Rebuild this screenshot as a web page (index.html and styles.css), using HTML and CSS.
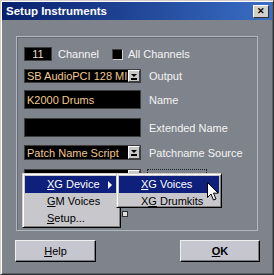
FILE: index.html
```html
<!DOCTYPE html>
<html lang="en">
<head>
    <meta charset="UTF-8">
    <title>Setup Instruments</title>
<link rel="stylesheet" href="styles.css">
</head>
<body>
    <div class="window">
        <div class="titlebar">
            <span class="title">Setup Instruments</span>
            <span class="close">&#x2715;</span>
        </div>

        <div class="group">
            <div class="row row-channel">
                <div class="field small">11</div>
                <span class="label channel-label">Channel</span>
                <span class="check"></span>
                <span class="label all">All Channels</span>
            </div>
            <div class="row row-output">
                <div class="field combo"><span class="txt">SB AudioPCI 128 MIDI</span><span class="drop"></span></div>
                <span class="label">Output</span>
            </div>
            <div class="row row-name">
                <div class="field"><span class="txt">K2000 Drums</span></div>
                <span class="label">Name</span>
            </div>
            <div class="row row-ext">
                <div class="field"></div>
                <span class="label">Extended Name</span>
            </div>
            <div class="row row-patch">
                <div class="field combo"><span class="txt">Patch Name Script</span><span class="drop"></span></div>
                <span class="label">Patchname Source</span>
            </div>
            <div class="row row-device">
                <div class="field combo"><span class="txt"></span><span class="drop"></span></div>
                <span class="label focus">XG Device</span>
            </div>
            <div class="row row-stub">
                <span class="stub"></span>
            </div>
        </div>

        <div class="buttons">
            <button class="btn"><u>H</u>elp</button>
            <button class="btn ok"><u>O</u>K</button>
        </div>

        <!-- popup menus over the dialog -->
        <div class="menu main-menu">
            <div class="item active"><u>X</u>G Device<span class="arrow"></span></div>
            <div class="item"><u>G</u>M Voices</div>
            <div class="item"><u>S</u>etup...</div>
        </div>
        <div class="menu sub-menu">
            <div class="item active"><u>X</u>G Voices</div>
            <div class="item">X<u>G</u> Drumkits</div>
        </div>

        <svg class="cursor" width="12" height="19" viewBox="0 0 12 19">
            <path d="M0.5 0.5 L0.5 15.5 L4 12 L6.5 18 L9 17 L6.5 11.2 L11.2 11.2 Z" fill="#fff" stroke="#000" stroke-width="1"/>
        </svg>
    </div>
</body>
</html>
```

FILE: styles.css
```css
body {
    margin: 0;
    font-family: "Liberation Sans", Arial, sans-serif;
    font-size: 11px;
}

.window {
    position: relative;
    width: 274px;
    height: 275px;
    box-sizing: border-box;
    padding: 1px;
    background-color: #7f838b;
    border: 1px solid;
    border-color: #d4d0c8 #303030 #303030 #d4d0c8;
    box-shadow: inset 1px 1px #ffffff, inset -1px -1px #5a5e66;
}

.titlebar {
    height: 18px;
    display: flex;
    align-items: center;
    justify-content: space-between;
    padding: 0 3px 0 4px;
    background: linear-gradient(90deg, #08206c, #3a6ec4);
}

.title {
    color: #ffffff;
    font-weight: bold;
    font-size: 11.5px;
}

.close {
    width: 14px;
    height: 11px;
    line-height: 11px;
    text-align: center;
    font-size: 9px;
    font-weight: bold;
    color: #000;
    background-color: #d4d0c8;
    border: 1px solid;
    border-color: #ffffff #303030 #303030 #ffffff;
}

.group {
    width: 242px;
    height: 195px;
    box-sizing: border-box;
    margin: 16px 0 0 14px;
    padding: 10px 0 0 7px;
    border: 1px solid #b2b6be;
    box-shadow: inset 1px 1px #666a72;
}

.row {
    display: flex;
    align-items: center;
}

.row-channel { height: 14px; }
.row-output { height: 14px; margin-top: 8px; }
.row-name { height: 19px; margin-top: 7px; }
.row-ext { height: 19px; margin-top: 9px; }
.row-patch { height: 15px; margin-top: 8px; }
.row-device { height: 15px; margin-top: 9px; }
.row-stub { height: 6px; margin-top: 27px; }

.field {
    position: relative;
    width: 117px;
    height: 100%;
    box-sizing: border-box;
    display: flex;
    align-items: center;
    padding-left: 2px;
    background-color: #000000;
    border: 1px solid #3c3c3c;
    color: #f2c98e;
    font-size: 11px;
    overflow: hidden;
    white-space: nowrap;
}

.field.small {
    width: 28px;
    justify-content: center;
    padding-left: 0;
    color: #ecdcc0;
}

.field .txt {
    min-width: 0;
    overflow: hidden;
}

.combo .txt {
    width: 103px;
    flex: none;
}

.drop {
    position: absolute;
    right: 0;
    top: 0;
    width: 12px;
    height: 100%;
    box-sizing: border-box;
    background-color: #c8c8c8;
    border: 1px solid;
    border-color: #ffffff #404040 #404040 #ffffff;
}

.drop::before {
    content: "";
    position: absolute;
    left: 2px;
    top: 3px;
    border-left: 3px solid transparent;
    border-right: 3px solid transparent;
    border-top: 3px solid #000;
}

.drop::after {
    content: "";
    position: absolute;
    left: 2px;
    top: 7px;
    width: 6px;
    height: 2px;
    background-color: #000;
}

.label {
    margin-left: 8px;
    color: #f4f4f4;
    font-size: 11px;
    white-space: nowrap;
}

.channel-label {
    margin-left: 6px;
    width: 54px;
}

.check {
    width: 11px;
    height: 11px;
    box-sizing: border-box;
    background-color: #000;
    border: 1px solid;
    border-color: #404040 #d0d0d0 #d0d0d0 #404040;
}

.label.all {
    margin-left: 5px;
}

.label.focus {
    margin-left: 6px;
    padding: 1px 3px 1px 2px;
    border: 1px dotted #202020;
}

.stub {
    margin-left: 98px;
    width: 6px;
    height: 6px;
    box-sizing: border-box;
    background-color: #e0e0e0;
    border: 1px solid #303030;
}

.buttons {
    display: flex;
    justify-content: space-between;
    margin-top: 9px;
    padding: 0 12px 0 13px;
}

.btn {
    width: 81px;
    height: 22px;
    padding: 0;
    font-family: "Liberation Sans", Arial, sans-serif;
    font-size: 11px;
    color: #000;
    background-color: #c6c6ce;
    border: 1px solid;
    border-color: #f0f0f0 #000000 #000000 #f0f0f0;
    box-shadow: inset -1px -1px #7a7a82;
}

.btn.ok {
    width: 80px;
    font-weight: bold;
}

.menu {
    position: absolute;
    box-sizing: border-box;
    padding: 2px;
    background-color: #c8c8cc;
    border: 1px solid;
    border-color: #d4d0c8 #000000 #000000 #d4d0c8;
    box-shadow: inset 1px 1px #ffffff, inset -1px -1px #808080;
    font-size: 11px;
}

.main-menu {
    left: 21px;
    top: 172px;
    width: 99px;
    height: 55px;
}

.sub-menu {
    left: 115px;
    top: 172px;
    width: 106px;
    height: 35px;
}

.item {
    position: relative;
    height: 17px;
    line-height: 17px;
    padding-left: 22px;
    color: #000;
    white-space: nowrap;
}

.item.active {
    background-color: #0e1f7c;
    color: #ffffff;
}

.arrow {
    position: absolute;
    right: 6px;
    top: 5px;
    border-top: 4px solid transparent;
    border-bottom: 4px solid transparent;
    border-left: 4px solid currentColor;
}

.cursor {
    position: absolute;
    left: 206px;
    top: 181px;
}
```
